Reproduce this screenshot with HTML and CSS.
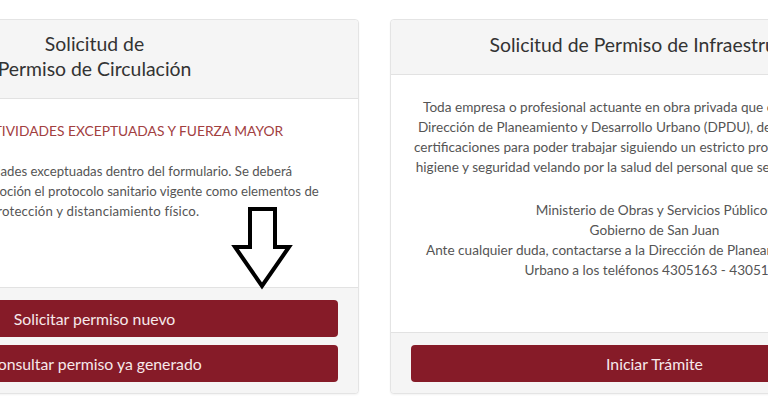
FILE: index.html
```html
<!DOCTYPE html>
<html lang="es">
<head>
<meta charset="utf-8">
<title>Solicitud de Permisos</title>
<link rel="stylesheet" href="styles.css">
</head>
<body>
<div class="row">
  <div class="card">
    <div class="card-head head-two">
      <h3 class="card-title">Solicitud de<br>Permiso de Circulación</h3>
    </div>
    <div class="card-body">
      <h5 class="alert-title">CASOS DE ACTIVIDADES EXCEPTUADAS Y FUERZA MAYOR</h5>
      <p class="text text-sm">Indique las actividades exceptuadas dentro del formulario. Se deberá<br>considerar en la locomoción el protocolo sanitario vigente como elementos de<br><span class="last">protección y distanciamiento físico.</span></p>
    </div>
    <div class="card-foot">
      <a class="btn" href="#">Solicitar permiso nuevo</a>
      <a class="btn" href="#">Consultar permiso ya generado</a>
    </div>
    <svg class="arrow" width="64" height="86" viewBox="0 0 64 86" aria-hidden="true">
      <polygon points="19,3 44,3 44,41 58,41 31,80 4,41 19,41" fill="none" stroke="#000" stroke-width="4" stroke-linejoin="miter"/>
    </svg>
  </div>
  <div class="card">
    <div class="card-head">
      <h3 class="card-title">Solicitud de Permiso de Infraestructura</h3>
    </div>
    <div class="card-body">
      <p class="text para">Toda empresa o profesional actuante en obra privada que esté registrada en la<br>Dirección de Planeamiento y Desarrollo Urbano (DPDU), deberá tramitar allí sus<br>certificaciones para poder trabajar siguiendo un estricto protocolo de medidas de<br>higiene y seguridad velando por la salud del personal que se desempeña en obra.</p>
      <p class="text">Ministerio de Obras y Servicios Públicos<br>Gobierno de San Juan<br>Ante cualquier duda, contactarse a la Dirección de Planeamiento y Desarrollo<br>Urbano a los teléfonos 4305163 - 4305155</p>
    </div>
    <div class="card-foot">
      <a class="btn" href="#">Iniciar Trámite</a>
    </div>
  </div>
</div>
</body>
</html>
```
FILE: styles.css
```css
html, body {
  margin: 0;
  padding: 0;
  background: #ffffff;
  overflow: hidden;
}
body {
  font-family: Lato, "Open Sans", "Liberation Sans", sans-serif;
  color: #555555;
  width: 768px;
  height: 400px;
}
.row {
  display: flex;
  gap: 31px;
  align-items: stretch;
  padding-top: 19px;
  margin-left: -170px;
  width: 1089px;
}
.card {
  position: relative;
  width: 529px;
  flex: 0 0 529px;
  box-sizing: border-box;
  height: 375px;
  border: 1px solid #e4e4e4;
  border-radius: 4px;
  background: #ffffff;
  box-shadow: 0 1px 2px rgba(0, 0, 0, 0.05);
  display: flex;
  flex-direction: column;
}
.card-head {
  background: #f5f5f5;
  border-bottom: 1px solid #e2e2e2;
  border-radius: 4px 4px 0 0;
  padding: 12px 15px 17px;
  text-align: center;
}
.head-two {
  padding-top: 11px;
}
.card-title {
  margin: 0;
  font-size: 19.4px;
  line-height: 25px;
  font-weight: 400;
  color: #333333;
  white-space: nowrap;
}
.card-body {
  flex: 1;
  padding: 22px 15px 10px;
  text-align: center;
}
.alert-title {
  margin: 0 0 20px;
  font-size: 13.8px;
  line-height: 20px;
  font-weight: 400;
  color: #a2403f;
  white-space: nowrap;
}
.text {
  margin: 0;
  font-size: 13.6px;
  line-height: 20px;
  color: #555555;
  white-space: nowrap;
}
.text-sm {
  font-size: 13.2px;
}
.last {
  letter-spacing: 0.2px;
}
.para {
  margin-bottom: 23px;
}
.card-foot {
  background: #f5f5f5;
  border-top: 1px solid #e2e2e2;
  border-radius: 0 0 4px 4px;
  padding: 12px 20px 11px;
  display: flex;
  flex-direction: column;
  gap: 8px;
}
.btn {
  display: block;
  height: 37px;
  line-height: 37px;
  background: #861b28;
  color: #f6e9eb;
  border-radius: 4px;
  text-align: center;
  text-decoration: none;
  font-size: 15.8px;
}
.arrow {
  position: absolute;
  left: 400px;
  top: 186px;
}
```
